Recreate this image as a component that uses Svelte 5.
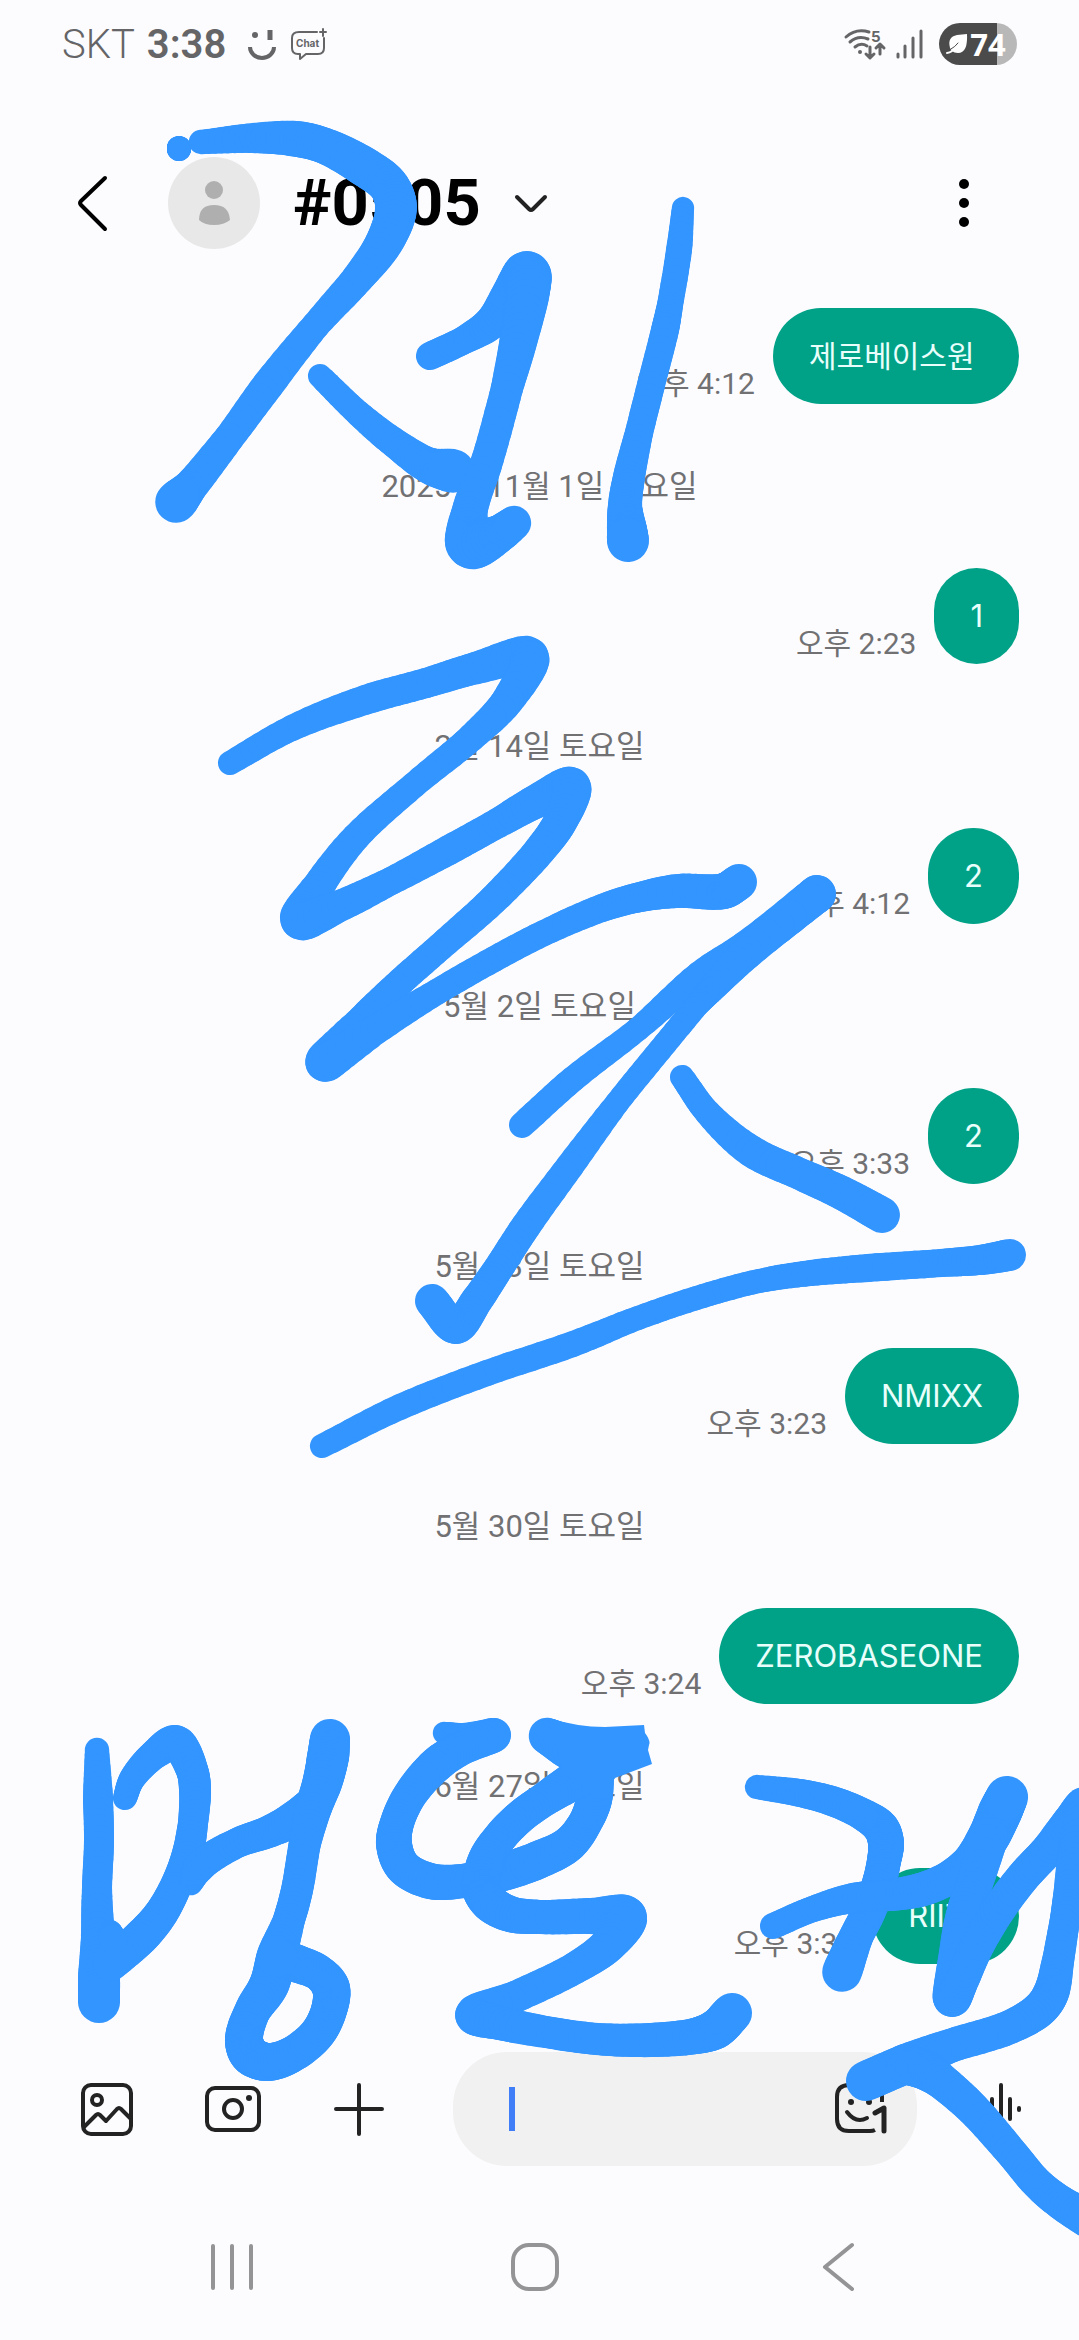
<script>
  let title = "#0505";
  let draft = "";
  let messages = [
    { date: "", time: "오후 4:12", text: "제로베이스원\u00a0", lang: "ko" },
    { date: "2025년 11월 1일 토요일", time: "오후 2:23", text: "1", lang: "en" },
    { date: "2월 14일 토요일", time: "오후 4:12", text: "2", lang: "en" },
    { date: "5월 2일 토요일", time: "오후 3:33", text: "2", lang: "en" },
    { date: "5월 23일 토요일", time: "오후 3:23", text: "NMIXX", lang: "en" },
    { date: "5월 30일 토요일", time: "오후 3:24", text: "ZEROBASEONE", lang: "en" },
    { date: "6월 27일 토요일", time: "오후 3:38", text: "RIIZE", lang: "en" }
  ];

  // pen marks, every point is [x, y, radius]
  let marks = [
    [[179, 148, 12], [179, 149, 12]],
    [[201, 142, 12], [255, 138, 15], [297, 139, 18], [325, 146, 18], [363, 166, 20], [389, 186, 20], [396, 208, 21], [385, 241, 19], [358, 278, 16], [316, 325, 14], [268, 385, 16], [229, 438, 15], [190, 487, 17], [176, 502, 21]],
    [[320, 376, 12], [359, 414, 13], [396, 444, 15], [430, 466, 18], [453, 471, 22]],
    [[430, 356, 14], [464, 340, 14], [492, 322, 17], [512, 294, 20], [527, 275, 24], [528, 290, 22], [519, 338, 19], [507, 388, 16], [488, 458, 16], [469, 515, 18], [471, 544, 25], [497, 535, 19], [514, 523, 17]],
    [[683, 208, 11], [679, 250, 13], [670, 305, 13], [665, 330, 14], [651, 385, 14], [639, 433, 14], [629, 477, 16], [625, 507, 17], [627, 530, 20], [628, 541, 21]],
    [[230, 763, 12], [292, 728, 13], [365, 700, 15], [426, 683, 15], [476, 668, 16], [529, 657, 20], [508, 700, 16], [472, 737, 14], [414, 785, 13], [356, 837, 14], [318, 887, 16], [301, 919, 21], [337, 907, 16], [391, 881, 14], [449, 850, 15], [498, 823, 15], [537, 801, 17], [571, 787, 20], [561, 820, 17], [540, 850, 16], [493, 900, 15], [440, 947, 14], [396, 986, 14], [358, 1024, 15], [325, 1062, 20], [375, 1030, 15], [430, 996, 13], [487, 963, 13], [544, 933, 13], [602, 908, 14], [640, 897, 15], [678, 891, 17], [724, 891, 18], [739, 882, 18]],
    [[522, 1125, 13], [573, 1079, 13], [638, 1029, 12], [700, 975, 14], [746, 949, 18], [817, 894, 19], [746, 953, 17], [712, 988, 14], [698, 1004, 12], [660, 1050, 12], [617, 1103, 12], [570, 1166, 14], [526, 1226, 15], [498, 1269, 15], [477, 1300, 16], [456, 1327, 17], [432, 1301, 17]],
    [[682, 1077, 12], [708, 1113, 13], [751, 1151, 16], [800, 1174, 16], [842, 1193, 17], [882, 1215, 18]],
    [[322, 1446, 12], [400, 1407, 13], [487, 1373, 13], [573, 1344, 13], [638, 1318, 12], [703, 1296, 12], [759, 1281, 12], [811, 1273, 13], [868, 1268, 14], [941, 1263, 14], [980, 1260, 15], [1010, 1255, 16]],
    [[97, 1750, 12], [98, 1797, 15], [99, 1840, 15], [97, 1890, 15], [98, 1940, 17], [99, 1977, 21], [99, 2002, 21]],
    [[125, 1798, 12], [132, 1779, 13], [155, 1754, 15], [176, 1743, 18], [192, 1770, 16], [195, 1790, 16], [193, 1823, 15], [187, 1857, 16], [175, 1888, 16], [160, 1915, 17], [141, 1937, 18], [111, 1963, 18]],
    [[110, 1932, 12], [113, 1940, 14]],
    [[191, 1884, 11], [199, 1867, 16], [237, 1843, 15], [268, 1832, 16], [295, 1818, 18], [312, 1800, 14]],
    [[330, 1739, 20], [328, 1757, 21], [323, 1780, 20], [313, 1810, 18], [305, 1843, 16], [297, 1890, 16], [288, 1923, 16], [277, 1955, 20], [269, 1985, 20], [252, 2012, 18], [244, 2040, 19], [250, 2055, 20], [267, 2062, 19], [291, 2055, 18], [317, 2034, 18], [329, 2010, 18], [331, 1988, 19], [319, 1973, 18], [295, 1963, 19], [276, 1957, 19]],
    [[444, 1733, 11], [465, 1737, 14], [494, 1735, 17], [462, 1748, 17], [437, 1764, 18], [410, 1795, 17], [397, 1823, 17], [394, 1844, 18], [403, 1867, 18], [430, 1881, 18], [463, 1881, 17], [500, 1873, 19], [538, 1860, 19], [569, 1844, 18], [586, 1821, 17], [594, 1800, 18], [596, 1778, 18]],
    [[547, 1736, 18], [570, 1748, 22], [600, 1765, 19], [570, 1783, 19], [545, 1799, 17], [520, 1817, 17], [498, 1840, 17], [486, 1862, 19], [481, 1888, 19], [490, 1903, 19], [510, 1914, 18], [540, 1917, 17], [593, 1916, 18], [626, 1917, 21], [609, 1944, 18], [575, 1968, 16], [515, 1997, 16], [474, 2015, 19], [500, 2023, 17], [546, 2032, 16], [597, 2039, 16], [650, 2040, 17], [695, 2036, 18], [716, 2029, 20], [732, 2013, 20]],
    [[757, 1787, 12], [800, 1793, 14], [832, 1801, 15], [862, 1814, 16], [881, 1828, 18], [886, 1843, 18], [884, 1861, 17], [879, 1883, 17], [869, 1911, 17], [856, 1937, 17], [842, 1972, 20]],
    [[773, 1926, 13], [813, 1909, 13], [853, 1898, 15], [890, 1895, 16], [920, 1890, 17], [947, 1879, 17], [970, 1862, 18], [988, 1838, 21], [1000, 1812, 22], [1007, 1797, 21]],
    [[988, 1838, 20], [974, 1885, 18], [963, 1911, 16], [955, 1960, 17], [952, 1998, 19], [961, 1982, 17], [976, 1948, 17], [997, 1912, 17], [1023, 1877, 17], [1048, 1850, 17], [1072, 1820, 18], [1085, 1807, 20], [1077, 1850, 19], [1070, 1890, 16], [1065, 1919, 15], [1058, 1961, 16], [1051, 1993, 18], [1040, 2009, 18], [1010, 2027, 17], [950, 2046, 17], [908, 2063, 20], [866, 2081, 20]],
    [[905, 2064, 20], [925, 2070, 20], [940, 2080, 18], [973, 2109, 17], [1010, 2151, 16], [1037, 2183, 16], [1060, 2202, 17], [1090, 2220, 19]]
  ];

  const steps = 8;

  function gap(p, q) {
    return Math.sqrt(Math.hypot(q[0] - p[0], q[1] - p[1])) || 1;
  }

  // smooth one coordinate between b and c
  function ease(a, b, c, d, k, t) {
    const m1 = k[1] * ((b - a) / k[0] - (c - a) / (k[0] + k[1]) + (c - b) / k[1]);
    const m2 = k[1] * ((c - b) / k[1] - (d - b) / (k[1] + k[2]) + (d - c) / k[2]);
    const t2 = t * t;
    const t3 = t2 * t;
    return (2 * t3 - 3 * t2 + 1) * b + (t3 - 2 * t2 + t) * m1 + (3 * t2 - 2 * t3) * c + (t3 - t2) * m2;
  }

  function inkLines(points) {
    const dots = [points[0]];
    for (let i = 0; i < points.length - 1; i++) {
      const b = points[i];
      const c = points[i + 1];
      const a = points[i - 1] || [2 * b[0] - c[0], 2 * b[1] - c[1]];
      const d = points[i + 2] || [2 * c[0] - b[0], 2 * c[1] - b[1]];
      const k = [gap(a, b), gap(b, c), gap(c, d)];
      for (let s = 1; s <= steps; s++) {
        const t = s / steps;
        dots.push([
          ease(a[0], b[0], c[0], d[0], k, t),
          ease(a[1], b[1], c[1], d[1], k, t),
          b[2] + (c[2] - b[2]) * t
        ]);
      }
    }
    return dots.slice(1).map((p, i) => ({
      d: `M${dots[i][0].toFixed(1)} ${dots[i][1].toFixed(1)}L${p[0].toFixed(1)} ${p[1].toFixed(1)}`,
      w: (dots[i][2] + p[2]).toFixed(1)
    }));
  }

  const ink = marks.map(inkLines).flat();
</script>

<style>
  :global(body) {
    background: #fcfcff;
  }

  .screen {
    position: relative;
    min-height: 100vh;
    display: flex;
    flex-direction: column;
    overflow: hidden;
    box-sizing: border-box;
    background: #fcfcff;
    color: #000;
    font-family: Roboto, "Noto Sans CJK KR", sans-serif;
  }

  svg {
    display: block;
    overflow: visible;
    fill: none;
    stroke: currentColor;
    stroke-linecap: round;
    stroke-linejoin: round;
  }

  svg .solid {
    fill: currentColor;
    stroke: none;
  }

  button {
    display: flex;
    align-items: center;
    justify-content: center;
    padding: 0;
    border: none;
    background: none;
    color: inherit;
    font: inherit;
  }

  .status {
    display: flex;
    align-items: center;
    height: 88px;
    padding: 0 62px;
    color: #656567;
    font-size: 40px;
  }

  .carrier {
    font-weight: 300;
    margin-right: 12px;
  }

  .clock {
    font-weight: 600;
    margin-right: 22px;
  }

  .status-right {
    display: flex;
    align-items: center;
    gap: 8px;
    margin-left: auto;
  }

  .chat-icon {
    margin-left: 14px;
  }

  .chat-icon text,
  .wifi text {
    fill: currentColor;
    stroke: none;
    font-family: Inter, sans-serif;
    font-weight: 700;
  }

  .battery {
    display: flex;
    align-items: center;
    justify-content: center;
    gap: 2px;
    width: 78px;
    height: 42px;
    margin-left: 8px;
    padding-right: 4px;
    box-sizing: border-box;
    border-radius: 21px;
    background: linear-gradient(to right, #4b4b4b 74%, #b8b8b9 74%);
    color: #fff;
    font-family: "Open Sans", sans-serif;
    font-size: 31px;
    font-weight: 700;
  }

  header {
    display: flex;
    align-items: center;
    height: 220px;
    box-sizing: border-box;
    padding: 10px 60px 0 58px;
  }

  .back {
    width: 68px;
    height: 96px;
  }

  .avatar {
    width: 93px;
    height: 93px;
    margin-left: 42px;
  }

  h1 {
    margin: 0 0 0 32px;
    font-size: 65px;
    line-height: 72px;
    font-weight: 700;
  }

  .expand {
    width: 60px;
    height: 60px;
    margin-left: 20px;
  }

  .more {
    width: 60px;
    height: 96px;
    margin-left: auto;
    margin-right: 25px;
  }

  .thread {
    flex: 1;
    margin: 0;
    padding: 0 60px;
    list-style: none;
  }

  .date {
    display: block;
    padding: 63px 0 61px;
    text-align: center;
    color: #717173;
    font-size: 31px;
    line-height: 40px;
  }

  .message {
    display: flex;
    align-items: flex-end;
    justify-content: flex-end;
    gap: 18px;
  }

  .message time {
    color: #717173;
    font-size: 30px;
    line-height: 40px;
  }

  .bubble {
    margin: 0;
    padding: 24px 36px;
    border-radius: 48px;
    background: #00a287;
    color: #e9fffb;
    font-family: Inter, "Noto Sans CJK KR", sans-serif;
    font-size: 31px;
    line-height: 48px;
  }

  .bubble:lang(ko) {
    font-size: 30px;
  }

  .composer {
    display: flex;
    align-items: center;
    gap: 30px;
    padding: 0 30px 0 59px;
    color: #232323;
  }

  .tool {
    flex: none;
    width: 96px;
    height: 96px;
  }

  .field {
    flex: 1;
    display: flex;
    align-items: center;
    min-width: 0;
    height: 114px;
    box-sizing: border-box;
    margin: 0 6px 0 16px;
    padding: 0 22px 0 56px;
    border-radius: 54px;
    background: #f1f1f1;
  }

  .caret {
    width: 6px;
    height: 44px;
    background: #3f7ef6;
  }

  .field input {
    flex: 1;
    min-width: 0;
    border: none;
    outline: none;
    background: none;
    font-family: inherit;
    font-size: 34px;
    caret-color: #3f7ef6;
  }

  .emoji {
    width: 70px;
    height: 96px;
  }

  .system {
    display: flex;
    padding: 29px 90px 1px 80px;
    color: #949496;
  }

  .system button {
    flex: 1;
    height: 144px;
  }

  .ink {
    position: absolute;
    top: 0;
    left: 0;
    width: 100%;
    height: auto;
    color: #3395ff;
    pointer-events: none;
  }
</style>

<svelte:head>
  <title>{title}</title>
</svelte:head>

<div class="screen">
  <div class="status">
    <span class="carrier">SKT</span>
    <span class="clock">3:38</span>
    <svg width="28" height="34" viewBox="0 0 28 34" aria-hidden="true">
      <circle class="solid" cx="7" cy="8" r="3" />
      <path d="M22 3v10" stroke-width="5" stroke-linecap="butt" />
      <path d="M2 20a12 11 0 0 0 24 0" stroke-width="4" stroke-linecap="butt" />
    </svg>
    <svg class="chat-icon" width="38" height="34" viewBox="0 0 38 34" aria-hidden="true">
      <path d="M27 5H9Q2 5 2 11v10q0 6 6 6h2v5l6-5h12q6 0 6-6V11M33 2v7M30 5h6" stroke-width="2" />
      <text x="6" y="20" font-size="10">Chat</text>
    </svg>
    <div class="status-right">
      <svg class="wifi" width="44" height="34" viewBox="0 0 44 34" aria-hidden="true">
        <path d="M3 10Q13 1 26 5M7 15Q15 8 25 12M12 20Q18 15 24 19" stroke-width="3" />
        <circle class="solid" cx="17" cy="25" r="2" />
        <text x="28" y="15" font-size="15">5</text>
        <path d="M27 20v10M23 27l4 4 4-4M37 27V18M33 21l4-4 4 4" stroke-width="3" />
      </svg>
      <svg width="28" height="32" viewBox="0 0 28 32" aria-hidden="true">
        <path d="M3 26v3M10 18v11M18 10v19M26 3v26" stroke-width="3" />
      </svg>
      <div class="battery">
        <svg width="22" height="22" viewBox="0 0 22 22" aria-hidden="true">
          <path class="solid" d="M4 15Q1 4 11 2l10-1q1 19-9 19-4 0-6-2z" />
          <path d="M1 20q5 0 11-9" stroke-width="2" />
          <path d="M5 16q4-2 7-6" stroke="#4b4b4b" stroke-width="1" />
        </svg>
        <span>74</span>
      </div>
    </div>
  </div>

  <header>
    <button class="back" aria-label="뒤로">
      <svg width="34" height="60" viewBox="0 0 34 60"><path d="M30 5 6 28q-2 2 0 4l24 24" stroke-width="4" /></svg>
    </button>
    <svg class="avatar" viewBox="0 0 93 93" aria-hidden="true">
      <circle cx="46" cy="46" r="46" fill="#e8e8e8" stroke="none" />
      <circle cx="46" cy="33" r="9" fill="#afafaf" stroke="none" />
      <path d="M31 63q0-15 15-15t16 15q-6 5-16 5t-15-5z" fill="#afafaf" stroke="none" />
    </svg>
    <h1>{title}</h1>
    <button class="expand" aria-label="펼치기">
      <svg width="34" height="20" viewBox="0 0 34 20"><path d="M3 4l12 12q2 2 4 0L31 4" stroke="#222" stroke-width="4" /></svg>
    </button>
    <button class="more" aria-label="더보기">
      <svg width="12" height="50" viewBox="0 0 12 50">
        <circle class="solid" cx="6" cy="6" r="5" />
        <circle class="solid" cx="6" cy="25" r="5" />
        <circle class="solid" cx="6" cy="44" r="5" />
      </svg>
    </button>
  </header>

  <ol class="thread">
    {#each messages as message}
      <li>
        {#if message.date}
          <span class="date">{message.date}</span>
        {/if}
        <div class="message">
          <time>{message.time}</time>
          <p class="bubble" lang={message.lang}>{message.text}</p>
        </div>
      </li>
    {/each}
  </ol>

  <div class="composer">
    <button class="tool" aria-label="갤러리">
      <svg width="54" height="54" viewBox="0 0 54 54" stroke-width="4">
        <rect x="3" y="3" width="48" height="49" rx="8" />
        <circle cx="17" cy="18" r="5" />
        <path d="M4 45l12-12q2-2 4 0l6 6 11-12q2-2 4 0l10 10" />
      </svg>
    </button>
    <button class="tool" aria-label="카메라">
      <svg width="58" height="50" viewBox="0 0 58 50" stroke-width="4">
        <rect x="3" y="4" width="52" height="42" rx="8" />
        <circle cx="29" cy="25" r="9" />
        <circle class="solid" cx="45" cy="14" r="3" />
      </svg>
    </button>
    <button class="tool" aria-label="추가">
      <svg width="54" height="54" viewBox="0 0 54 54" stroke-width="4"><path d="M27 3v49M4 27h46" /></svg>
    </button>
    <div class="field">
      <span class="caret"></span>
      <input type="text" aria-label="메시지 입력" bind:value={draft} />
      <button class="emoji" aria-label="이모티콘">
        <svg width="54" height="54" viewBox="0 0 54 54" stroke-width="4">
          <path d="M42 48q-2 1-5 1H16Q4 49 4 37V15Q4 3 16 3h21q12 0 12 12v5" stroke-linecap="butt" />
          <circle class="solid" cx="18" cy="20" r="3" />
          <circle class="solid" cx="36" cy="20" r="3" />
          <path d="M14 30q9 12 20 6" />
          <path d="M42 31l9-5v23" stroke-width="5" />
        </svg>
      </button>
    </div>
    <button class="tool" aria-label="음성 입력">
      <svg width="54" height="54" viewBox="0 0 54 54" stroke-width="4">
        <path d="M9 26v2M18 17v20M27 3v49M36 17v20M45 26v2" />
      </svg>
    </button>
  </div>

  <nav class="system">
    <button aria-label="최근 앱">
      <svg width="44" height="50" viewBox="0 0 44 50" stroke-width="4"><path d="M3 4v42M22 4v42M41 4v42" /></svg>
    </button>
    <button aria-label="홈">
      <svg width="50" height="50" viewBox="0 0 50 50" stroke-width="4"><rect x="3" y="3" width="44" height="44" rx="16" /></svg>
    </button>
    <button aria-label="이전">
      <svg width="34" height="50" viewBox="0 0 34 50" stroke-width="4"><path d="M31 3 4 25l27 22" /></svg>
    </button>
  </nav>

  <svg class="ink" viewBox="0 0 1079 2340" aria-hidden="true">
    {#each ink as line}
      <path d={line.d} stroke-width={line.w} />
    {/each}
    <path class="solid" d="M549 1718q28 9 56 9l39-2 1 8q6 8 4 12l-1 5 4 14-37 14-15 22-38-31z" />
  </svg>
</div>
